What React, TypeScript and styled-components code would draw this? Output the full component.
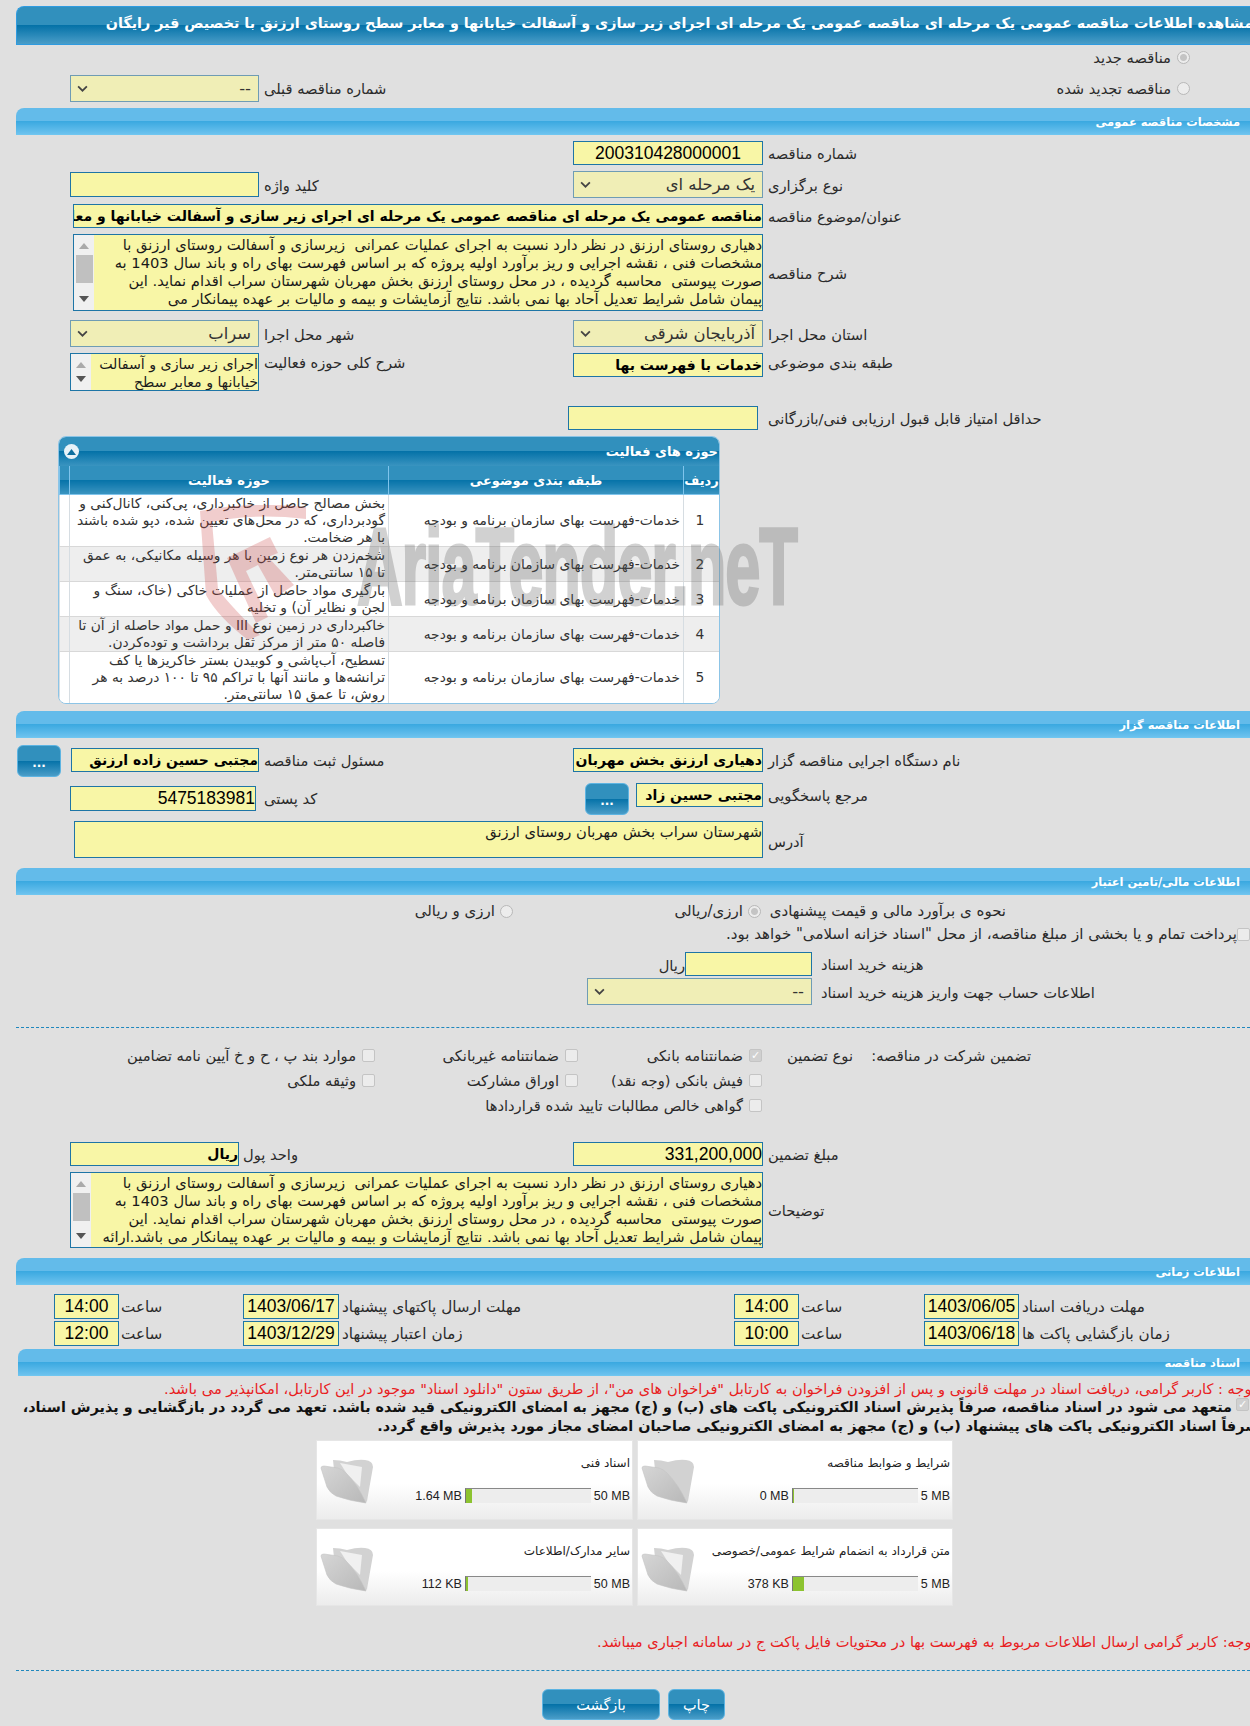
import { ReactNode } from 'react'
import styled, { createGlobalStyle } from 'styled-components'

const GlobalStyle = createGlobalStyle`
  html, body {
    margin: 0;
    padding: 0;
    width: 1250px;
    height: 1726px;
    overflow: hidden;
    background: #e0e0e0;
  }
  body {
    font-family: "DejaVu Sans", "Liberation Sans", sans-serif;
    font-size: 14.7px;
    color: #2b2b2b;
  }
`

const darkBar = 'linear-gradient(#3190bd 0, #3190bd 49%, #0572a8 50%, #4a9dc8 100%)'

const Page = styled.div`
  position: relative;
  direction: rtl;
  width: 1250px;
  height: 1726px;
  overflow: hidden;
`

const TitleBar = styled.div`
  box-sizing: border-box;
  height: 39px;
  margin: 6px 0 0 16px;
  border: 1px solid #2f9be0;
  border-right: 0;
  border-radius: 8px 0 0 0;
  background: ${darkBar};
  color: #fff;
  font-size: 14.3px;
  font-weight: bold;
  line-height: 32px;
  white-space: nowrap;
  overflow: hidden;
  text-indent: -3px;
`

const SectionBar = styled.div<{ $left?: number; $top: number }>`
  box-sizing: border-box;
  height: 27px;
  margin: ${(p) => p.$top}px 0 0 ${(p) => p.$left ?? 16}px;
  border-radius: 8px 0 0 0;
  border-bottom: 1px solid #6fc6f0;
  background: linear-gradient(#63bbea 0, #63bbea 49%, #39a8e0 50%, #6cc2ee 100%);
  color: #fff;
  font-size: 11.4px;
  font-weight: bold;
  line-height: 28px;
  padding-right: 10px;
`

const RadioLine = styled.div<{ $top: number; $h: number }>`
  display: flex;
  align-items: center;
  height: ${(p) => p.$h}px;
  margin-top: ${(p) => p.$top}px;
  padding-right: 60px;
  gap: 6px;
`

const Row = styled.div<{ $top: number; $h: number; $cols?: string }>`
  display: grid;
  grid-template-columns: ${(p) => p.$cols ?? '487px 190px 314px 189px'};
  height: ${(p) => p.$h}px;
  margin-top: ${(p) => p.$top}px;
`

const Cell = styled.div`
  display: flex;
  justify-content: flex-start;
  min-width: 0;
`

const WideCell = styled.div`
  grid-column: 2 / 5;
  display: flex;
`

const LabelText = styled.div<{ $h?: number; $pad?: number }>`
  line-height: ${(p) => (p.$h ?? 24) + 2}px;
  text-align: left;
  padding-left: ${(p) => p.$pad ?? 5}px;
  white-space: nowrap;
`

const Input = styled.div<{ $w?: number; $h?: number; $bold?: boolean; $mt?: number }>`
  box-sizing: border-box;
  flex: none;
  width: ${(p) => (p.$w ? `${p.$w}px` : '100%')};
  height: ${(p) => p.$h ?? 24}px;
  margin-top: ${(p) => p.$mt ?? 0}px;
  background: #f8f6a6;
  border: 1px solid #1e75a6;
  color: #000;
  font-size: 14px;
  font-weight: ${(p) => (p.$bold ? 'bold' : 'normal')};
  line-height: 23px;
  white-space: nowrap;
  overflow: hidden;
`

const Center = styled.span`
  display: block;
  text-align: center;
  font-family: "Liberation Sans", sans-serif;
  font-size: 17.5px;
  line-height: 23px;
`

const Num = styled.span`
  display: block;
  direction: ltr;
  text-align: right;
  font-family: "Liberation Sans", sans-serif;
  font-size: 17.5px;
  line-height: 23px;
`

const SelectBox = styled.div<{ $w?: number }>`
  box-sizing: border-box;
  display: flex;
  align-items: center;
  justify-content: space-between;
  width: ${(p) => (p.$w ? `${p.$w}px` : '100%')};
  height: 27px;
  padding: 0 7px 0 6px;
  background: #f0eeb6;
  border: 1px solid #6f9cb4;
  color: #333;
  font-size: 16.4px;
  white-space: nowrap;
`

const Chevron = styled.svg`
  width: 11px;
  height: 7px;
  flex: none;
`

const Select = ({ value, w }: { value: string; w?: number }) => (
  <SelectBox $w={w}>
    <span>{value}</span>
    <Chevron viewBox="0 0 12 8">
      <path d="M1 1.5 L6 6.5 L11 1.5" fill="none" stroke="#444" strokeWidth="2" />
    </Chevron>
  </SelectBox>
)

const Area = styled.div<{ $w?: number; $h: number }>`
  box-sizing: border-box;
  display: flex;
  width: ${(p) => (p.$w ? `${p.$w}px` : '100%')};
  height: ${(p) => p.$h}px;
  background: #f8f6a6;
  border: 1px solid #1e75a6;
  overflow: hidden;
`

const AreaText = styled.div<{ $size?: number }>`
  flex: 1;
  min-width: 0;
  padding-top: 1px;
  font-size: ${(p) => p.$size ?? 14.7}px;
  line-height: 18px;
  color: #1a1a1a;
  white-space: pre;
  overflow: hidden;
`

const Scroll = styled.div`
  box-sizing: border-box;
  display: flex;
  flex-direction: column;
  align-items: center;
  justify-content: space-between;
  flex: none;
  width: 20px;
  padding: 8px 0;
  background: #f0f0f0;
`

const ScrollThumb = styled.div`
  width: 17px;
  height: 28px;
  margin: 6px 0 auto;
  background: #c0c0c0;
`

const ScrollArrow = styled.svg`
  width: 10px;
  height: 6px;
  flex: none;
`

const FakeScroll = ({ thumb }: { thumb?: boolean }) => (
  <Scroll>
    <ScrollArrow viewBox="0 0 10 6">
      <path d="M5 0 L10 6 L0 6 Z" fill="#aaa" />
    </ScrollArrow>
    {thumb && <ScrollThumb />}
    <ScrollArrow viewBox="0 0 10 6">
      <path d="M5 6 L10 0 L0 0 Z" fill="#555" />
    </ScrollArrow>
  </Scroll>
)

const DotButton = styled.div<{ $mr: number }>`
  box-sizing: border-box;
  flex: none;
  width: 44px;
  height: 32px;
  margin-right: ${(p) => p.$mr}px;
  border: 1px solid #5db4e2;
  border-radius: 6px;
  background: ${darkBar};
  color: #fff;
  font-size: 12px;
  font-weight: bold;
  text-align: center;
  line-height: 34px;
`

const RadioDot = styled.span<{ $on?: boolean }>`
  box-sizing: border-box;
  flex: none;
  width: 13px;
  height: 13px;
  border-radius: 50%;
  border: 1px solid #b8b8b8;
  background: ${(p) => (p.$on ? 'radial-gradient(#c4c4c4 0 3px, #ececec 4px)' : '#ececec')};
`

const CheckBox = styled.span<{ $on?: boolean }>`
  box-sizing: border-box;
  flex: none;
  display: inline-block;
  width: 13px;
  height: 13px;
  border: 1px solid #c4c4c4;
  border-radius: 2px;
  background: ${(p) => (p.$on ? '#d0d0d0' : '#ececec')};
  color: #fff;
  font-size: 11px;
  line-height: 12px;
  text-align: center;
`

const PledgeBox = styled(CheckBox)`
  position: absolute;
  right: 1px;
  top: 0;
`

const Panel = styled.div`
  box-sizing: border-box;
  width: 662px;
  height: 268px;
  margin: 6px 530px 0 0;
  border: 1px solid #8cc4e6;
  border-radius: 8px;
  overflow: hidden;
  background: #fff;
`

const PanelHead = styled.div`
  display: flex;
  align-items: center;
  justify-content: space-between;
  height: 29px;
  padding: 0 1px 0 5px;
  background: linear-gradient(#3190bd 0, #3190bd 49%, #0572a8 50%, #3a94c0 100%);
  color: #fff;
  font-size: 13px;
  font-weight: bold;
`

const Collapse = styled.span`
  display: flex;
  align-items: center;
  justify-content: center;
  width: 15px;
  height: 15px;
  border-radius: 50%;
  background: #e8f2f8;
`

const Table = styled.table`
  width: 100%;
  border-collapse: collapse;
  table-layout: fixed;
`

const Th = styled.th<{ $w?: number }>`
  width: ${(p) => (p.$w ? `${p.$w}px` : 'auto')};
  height: 28px;
  padding: 0;
  border-left: 1px solid #7fc4ec;
  border-bottom: 1px solid #7fc4ec;
  background: linear-gradient(#3190bd 0, #3190bd 49%, #0572a8 50%, #3a94c0 100%);
  color: #fff;
  font-size: 13px;
  font-weight: bold;
  white-space: nowrap;
  overflow: hidden;
`

const Tr = styled.tr<{ $odd: boolean }>`
  background: ${(p) => (p.$odd ? '#fff' : '#eeeeee')};
`

const Td = styled.td<{ $center?: boolean }>`
  padding: 0 3px 0 0;
  border-left: 1px solid #d6dde2;
  border-bottom: 1px solid #d8d8d8;
  color: #333;
  font-size: 13.8px;
  line-height: 17px;
  white-space: nowrap;
  text-align: ${(p) => (p.$center ? 'center' : 'right')};
  overflow: hidden;
`

const Watermark = styled.div`
  position: absolute;
  left: 198px;
  top: 505px;
  width: 610px;
  height: 135px;
  display: flex;
  direction: ltr;
  pointer-events: none;
`

const ShieldMark = styled.svg`
  flex: none;
`

const WaterText = styled.span`
  flex: none;
  margin: -7px 0 0 49px;
  font-family: "Liberation Sans", sans-serif;
  font-size: 110px;
  font-weight: bold;
  line-height: 135px;
  letter-spacing: -2px;
  color: #5a5a5a;
  -webkit-text-stroke: 3px #5a5a5a;
  opacity: 0.27;
  transform: scaleX(0.575);
  transform-origin: left center;
  white-space: nowrap;
`

const FinanceLine = styled.div<{ $top: number; $h: number; $pad: number }>`
  display: flex;
  align-items: center;
  height: ${(p) => p.$h}px;
  margin-top: ${(p) => p.$top}px;
  padding-right: ${(p) => p.$pad}px;
  font-size: 15px;
  white-space: nowrap;
`

const PlainLabel = styled.span<{ $w?: number; $pad?: number }>`
  box-sizing: border-box;
  flex: none;
  width: ${(p) => (p.$w ? `${p.$w}px` : 'auto')};
  padding-right: ${(p) => p.$pad ?? 0}px;
`

const CurrencyText = styled.span`
  line-height: 27px;
`

const Dashed = styled.div<{ $top: number }>`
  margin: ${(p) => p.$top}px 0 0 16px;
  border-top: 1px dashed #1f87bd;
`

const GuaranteeGrid = styled.div`
  display: grid;
  grid-template-columns: 178px 91px 184px 203px 200px;
  grid-auto-rows: 25px;
  margin-top: 15px;
  padding-right: 219px;
  align-items: center;
  white-space: nowrap;
`

const Check = styled.div<{ $start?: number }>`
  display: flex;
  align-items: center;
  gap: 6px;
  grid-column-start: ${(p) => p.$start ?? 'auto'};
  white-space: nowrap;
`

const TimeRow = styled.div<{ $top: number }>`
  display: grid;
  grid-template-columns: 231px 95px 125px 65px 395px 96px 124px 65px;
  height: 25px;
  margin-top: ${(p) => p.$top}px;
  font-size: 15.2px;
`

const RedNote = styled.div<{ $top: number }>`
  margin-top: ${(p) => p.$top}px;
  margin-right: -6px;
  color: #e8201e;
  font-size: 14.6px;
  line-height: 18px;
  white-space: nowrap;
`

const Pledge = styled.div`
  position: relative;
  font-weight: bold;
  font-size: 14.35px;
  line-height: 19px;
  color: #111;
  white-space: nowrap;
`

const PledgeLine = styled.div<{ $right: number }>`
  margin-right: ${(p) => p.$right}px;
`

const Cards = styled.div`
  display: grid;
  grid-template-columns: 316px 317px;
  grid-template-rows: 80px 78px;
  gap: 8px 4px;
  margin: 4px 297px 0 0;
`

const Card = styled.div`
  box-sizing: border-box;
  display: flex;
  justify-content: space-between;
  border: 1px solid #e6e6e6;
  background: linear-gradient(#fff 0, #fff 55%, #ececec 100%);
  padding: 14px 2px 0 3px;
`

const CardBody = styled.div`
  display: flex;
  flex-direction: column;
  flex: 1;
  gap: 17px;
  min-width: 0;
`

const CardName = styled.div`
  font-size: 12px;
  line-height: 16px;
  color: #222;
  white-space: nowrap;
`

const Meter = styled.div`
  display: flex;
  align-items: center;
  direction: ltr;
  justify-content: flex-end;
  gap: 3px;
  font-family: "Liberation Sans", sans-serif;
  font-size: 12.5px;
  color: #222;
`

const Track = styled.div`
  box-sizing: border-box;
  width: 126px;
  height: 15px;
  background: #ededed;
  border-top: 1px solid #888;
  border-left: 1px solid #777;
`

const Fill = styled.div`
  height: 100%;
  background: #8cc330;
`

const FolderIcon = styled.svg`
  width: 54px;
  height: 48px;
  flex: none;
  margin-top: 4px;
`

const Folder = ({ paper }: { paper: boolean }) => (
  <FolderIcon viewBox="0 0 54 48">
    <defs>
      <linearGradient id="folderFace" x1="0" y1="0" x2="1" y2="1">
        <stop offset="0" stopColor="#d6d6d6" />
        <stop offset="1" stopColor="#b8b8b8" />
      </linearGradient>
    </defs>
    <path d="M13 1 Q20 1 27 3 Q38 0 45 1 Q53 2 53 8 L47 42 Q46 45 42 43 L16 30 Z" fill="#d2d2d2" />
    {paper && <path d="M20 4 L42 8 L40 28 L27 15 Z" fill="#f0f0f0" />}
    <path
      d="M1 9 Q1 7 4 7 L18 9 Q22 10 26 14 Q38 26 46 44 Q30 42 16 37 Q10 34 7 28 Z"
      fill="url(#folderFace)"
      stroke="#c4c4c4"
      strokeWidth="0.6"
    />
  </FolderIcon>
)

const Buttons = styled.div`
  display: flex;
  justify-content: flex-start;
  gap: 8px;
  margin: 18px 525px 0 0;
`

const Btn = styled.div<{ $w: number }>`
  box-sizing: border-box;
  width: ${(p) => p.$w}px;
  height: 31px;
  border: 1px solid #5db4e2;
  border-radius: 6px;
  background: ${darkBar};
  color: #fff;
  font-size: 14.5px;
  text-align: center;
  line-height: 30px;
`

const descLines = [
  'دهیاری روستای ارزنق در نظر دارد نسبت به اجرای عملیات عمرانی  زیرسازی و آسفالت روستای ارزنق با',
  'مشخصات فنی ، نقشه اجرایی و ریز برآورد اولیه پروژه که بر اساس فهرست بهای راه و باند سال 1403 به',
  'صورت پیوستی  محاسبه گردیده ، در محل روستای ارزنق بخش مهربان شهرستان سراب اقدام نماید. این',
]

const lastDescLine = 'پیمان شامل شرایط تعدیل آحاد بها نمی باشد. نتایج آزمایشات و بیمه و مالیات بر عهده پیمانکار می'

const tenderTitle =
  'مناقصه عمومی یک مرحله ای مناقصه عمومی یک مرحله ای اجرای زیر سازی و آسفالت خیابانها و معابر سطح روستای ارزنق با تخصیص قیر رایگان'

const rows = [
  [
    'بخش مصالح حاصل از خاکبرداری، پی‌کنی، کانال‌کنی و',
    'گودبرداری، که در محل‌های تعیین شده، دپو شده باشند',
    'با هر ضخامت.',
  ],
  ['شخم‌زدن هر نوع زمین با هر وسیله مکانیکی، به عمق', 'تا ۱۵ سانتی‌متر.'],
  ['بارگیری مواد حاصل از عملیات خاکی (خاک، سنگ و', 'لجن و نظایر آن) و تخلیه'],
  ['خاکبرداری در زمین نوع III و حمل مواد حاصله از آن تا', 'فاصله ۵۰ متر از مرکز ثقل برداشت و توده‌کردن.'],
  [
    'تسطیح، آب‌پاشی و کوبیدن بستر خاکریزها یا کف',
    'ترانشه‌ها و مانند آنها با تراکم ۹۵ تا ۱۰۰ درصد به هر',
    'روش، تا عمق ۱۵ سانتی‌متر.',
  ],
]

const docs = [
  { name: 'شرایط و ضوابط مناقصه', used: '0 MB', max: '5 MB', px: 1, paper: false },
  { name: 'اسناد فنی', used: '1.64 MB', max: '50 MB', px: 6, paper: true },
  { name: 'متن قرارداد به انضمام شرایط عمومی/خصوصی', used: '378 KB', max: '5 MB', px: 11, paper: true },
  { name: 'سایر مدارک/اطلاعات', used: '112 KB', max: '50 MB', px: 2, paper: true },
]

const Lines = ({ items }: { items: string[] }) => (
  <>
    {items.map((l, i) => (
      <div key={i}>{l}</div>
    ))}
  </>
)

const Label = ({ children, h, pad }: { children: ReactNode; h?: number; pad?: number }) => (
  <LabelText $h={h} $pad={pad}>
    {children}
  </LabelText>
)

const TimeLine = ({ top, a, b, c, d, e, f }: Record<'a' | 'b' | 'c' | 'd' | 'e' | 'f', string> & { top: number }) => (
  <TimeRow $top={top}>
    <Label pad={3}>{a}</Label>
    <Input $h={25}>
      <Center>{b}</Center>
    </Input>
    <Label pad={2}>ساعت</Label>
    <Input $h={25}>
      <Center>{c}</Center>
    </Input>
    <Label pad={3}>{d}</Label>
    <Input $h={25}>
      <Center>{e}</Center>
    </Input>
    <Label pad={2}>ساعت</Label>
    <Input $h={25}>
      <Center>{f}</Center>
    </Input>
  </TimeRow>
)

export default function App() {
  return (
    <>
      <GlobalStyle />
      <Page>
        <TitleBar>
          مشاهده اطلاعات مناقصه عمومی یک مرحله ای مناقصه عمومی یک مرحله ای اجرای زیر سازی و آسفالت خیابانها و معابر سطح روستای ارزنق با تخصیص قیر رایگان
        </TitleBar>

        <RadioLine $top={5} $h={15}>
          <RadioDot $on />
          <PlainLabel>مناقصه جدید</PlainLabel>
        </RadioLine>
        <Row $top={10} $h={26}>
          <Cell>
            <RadioLine $top={0} $h={26}>
              <RadioDot />
              <PlainLabel>مناقصه تجدید شده</PlainLabel>
            </RadioLine>
          </Cell>
          <Cell />
          <Label h={26}>شماره مناقصه قبلی</Label>
          <Select value="--" />
        </Row>

        <SectionBar $top={7}>مشخصات مناقصه عمومی</SectionBar>

        <Row $top={6} $h={24}>
          <Label>شماره مناقصه</Label>
          <Input>
            <Center>200310428000001</Center>
          </Input>
        </Row>
        <Row $top={6} $h={27}>
          <Label h={27}>نوع برگزاری</Label>
          <Select value="یک مرحله ای" />
          <Label h={27}>کلید واژه</Label>
          <Input $h={25} $mt={1} />
        </Row>
        <Row $top={6} $h={24}>
          <Label>عنوان/موضوع مناقصه</Label>
          <WideCell>
            <Input $w={690} $bold>
              {tenderTitle}
            </Input>
          </WideCell>
        </Row>
        <Row $top={6} $h={77}>
          <Label h={77}>شرح مناقصه</Label>
          <WideCell>
            <Area $w={690} $h={77}>
              <AreaText>
                <Lines items={[...descLines, lastDescLine]} />
              </AreaText>
              <FakeScroll thumb />
            </Area>
          </WideCell>
        </Row>
        <Row $top={9} $h={27}>
          <Label h={27}>استان محل اجرا</Label>
          <Select value="آذربایجان شرقی" />
          <Label h={27}>شهر محل اجرا</Label>
          <Select value="سراب" />
        </Row>
        <Row $top={6} $h={38}>
          <Label h={18}>طبقه بندی موضوعی</Label>
          <Input $bold>خدمات با فهرست بها</Input>
          <Label h={18}>شرح کلی حوزه فعالیت</Label>
          <Area $h={38}>
            <AreaText $size={14.2}>
              <Lines items={['اجرای زیر سازی و آسفالت', 'خیابانها و معابر سطح']} />
            </AreaText>
            <FakeScroll />
          </Area>
        </Row>
        <Row $top={15} $h={24} $cols="492px 190px">
          <Label pad={10}>حداقل امتیاز قابل قبول ارزیابی فنی/بازرگانی</Label>
          <Input />
        </Row>

        <Panel>
          <PanelHead>
            <span>حوزه های فعالیت</span>
            <Collapse>
              <svg width="9" height="6" viewBox="0 0 9 6">
                <path d="M4.5 0 L9 6 L0 6 Z" fill="#0f6f9f" />
              </svg>
            </Collapse>
          </PanelHead>
          <Table>
            <thead>
              <tr>
                <Th $w={35}>ردیف</Th>
                <Th $w={294}>طبقه بندی موضوعی</Th>
                <Th $w={318}>حوزه فعالیت</Th>
                <Th />
              </tr>
            </thead>
            <tbody>
              {rows.map((lines, i) => (
                <Tr key={i} $odd={i % 2 === 0}>
                  <Td $center>{i + 1}</Td>
                  <Td>خدمات-فهرست بهای سازمان برنامه و بودجه</Td>
                  <Td>
                    <Lines items={lines} />
                  </Td>
                  <Td />
                </Tr>
              ))}
            </tbody>
          </Table>
        </Panel>

        <Watermark>
          <ShieldMark width="110" height="135" viewBox="0 0 110 135">
            <path
              d="M2 6 Q50 -4 108 2 L108 14 Q55 8 14 17 L20 84 Q28 96 62 130 L50 135 Q20 112 8 90 Z"
              fill="rgba(205,70,70,0.27)"
            />
            <path d="M29 53 L72 32 L80 48 L70 52 L96 80 L78 92 L60 60 L48 66 L70 112 L58 118 Z" fill="rgba(205,70,70,0.27)" />
          </ShieldMark>
          <WaterText>AriaTender.neT</WaterText>
        </Watermark>

        <SectionBar $top={7}>اطلاعات مناقصه گزار</SectionBar>

        <Row $top={7} $h={32}>
          <Label h={30}>نام دستگاه اجرایی مناقصه گزار</Label>
          <Input $mt={3} $bold>
            دهیاری ارزنق بخش مهربان
          </Input>
          <Label h={30}>مسئول ثبت مناقصه</Label>
          <Cell>
            <Input $w={188} $mt={3} $bold>
              مجتبی حسین زاده ارزنق
            </Input>
            <DotButton $mr={10}>...</DotButton>
          </Cell>
        </Row>
        <Row $top={6} $h={32} $cols="487px 190px 317px 186px">
          <Label>مرجع پاسخگویی</Label>
          <Cell>
            <Input $w={127} $bold>
              مجتبی حسین زاد
            </Input>
            <DotButton $mr={7}>...</DotButton>
          </Cell>
          <Label h={30} pad={8}>
            کد پستی
          </Label>
          <Input $h={25} $mt={3}>
            <Num>5475183981</Num>
          </Input>
        </Row>
        <Row $top={6} $h={37}>
          <Label h={40}>آدرس</Label>
          <WideCell>
            <Area $w={689} $h={37}>
              <AreaText>شهرستان سراب بخش مهربان روستای ارزنق</AreaText>
            </Area>
          </WideCell>
        </Row>

        <SectionBar $top={10}>اطلاعات مالی/تامین اعتبار</SectionBar>

        <FinanceLine $top={6} $h={20} $pad={244}>
          <PlainLabel $w={245}>نحوه ی برآورد مالی و قیمت پیشنهادی</PlainLabel>
          <RadioDot $on />
          <PlainLabel $w={235} $pad={5}>
            ارزی/ریالی
          </PlainLabel>
          <RadioDot />
          <PlainLabel $pad={5}>ارزی و ریالی</PlainLabel>
        </FinanceLine>
        <FinanceLine $top={3} $h={20} $pad={0}>
          <CheckBox />
          <PlainLabel>پرداخت تمام و یا بخشی از مبلغ مناقصه، از محل "اسناد خزانه اسلامی" خواهد بود.</PlainLabel>
        </FinanceLine>
        <Row $top={8} $h={24} $cols="438px 127px auto">
          <Label pad={9}>هزینه خرید اسناد</Label>
          <Input />
          <CurrencyText>ریال</CurrencyText>
        </Row>
        <Row $top={2} $h={27} $cols="438px 225px">
          <Label h={27} pad={9}>
            اطلاعات حساب جهت واریز هزینه خرید اسناد
          </Label>
          <Select value="--" />
        </Row>

        <Dashed $top={22} />

        <GuaranteeGrid>
          <PlainLabel>تضمین شرکت در مناقصه:</PlainLabel>
          <PlainLabel>نوع تضمین</PlainLabel>
          <Check>
            <CheckBox $on>✓</CheckBox>
            ضمانتنامه بانکی
          </Check>
          <Check>
            <CheckBox />
            ضمانتنامه غیربانکی
          </Check>
          <Check>
            <CheckBox />
            موارد بند پ ، ح و خ آیین نامه تضامین
          </Check>
          <Check $start={3}>
            <CheckBox />
            فیش بانکی (وجه نقد)
          </Check>
          <Check>
            <CheckBox />
            اوراق مشارکت
          </Check>
          <Check>
            <CheckBox />
            وثیقه ملکی
          </Check>
          <Check $start={3}>
            <CheckBox />
            گواهی خالص مطالبات تایید شده قراردادها
          </Check>
        </GuaranteeGrid>

        <Row $top={24} $h={24} $cols="487px 190px 334px 169px">
          <Label>مبلغ تضمین</Label>
          <Input>
            <Num>331,200,000</Num>
          </Input>
          <Label pad={4}>واحد پول</Label>
          <Input $bold>ریال</Input>
        </Row>
        <Row $top={6} $h={76}>
          <Label h={76}>توضیحات</Label>
          <WideCell>
            <Area $w={696} $h={76}>
              <AreaText>
                <Lines items={[...descLines, `${lastDescLine} باشد.ارائه`]} />
              </AreaText>
              <FakeScroll thumb />
            </Area>
          </WideCell>
        </Row>

        <SectionBar $top={10}>اطلاعات زمانی</SectionBar>

        <TimeLine
          top={9}
          a="مهلت دریافت اسناد"
          b="1403/06/05"
          c="14:00"
          d="مهلت ارسال پاکتهای پیشنهاد"
          e="1403/06/17"
          f="14:00"
        />
        <TimeLine
          top={2}
          a="زمان بازگشایی پاکت ها"
          b="1403/06/18"
          c="10:00"
          d="زمان اعتبار پیشنهاد"
          e="1403/12/29"
          f="12:00"
        />

        <SectionBar $top={3} $left={18}>
          اسناد مناقصه
        </SectionBar>

        <RedNote $top={4}>
          توجه : کاربر گرامی، دریافت اسناد در مهلت قانونی و پس از افزودن فراخوان به کارتابل "فراخوان های من"، از طریق ستون "دانلود اسناد" موجود در این کارتابل، امکانپذیر می باشد.
        </RedNote>
        <Pledge>
          <PledgeLine $right={18}>
            متعهد می شود در اسناد مناقصه، صرفاً پذیرش اسناد الکترونیکی پاکت های (ب) و (ج) مجهز به امضای الکترونیکی قید شده باشد. تعهد می گردد در بازگشایی و پذیرش اسناد،
          </PledgeLine>
          <PledgeLine $right={-9}>
            صرفاً اسناد الکترونیکی پاکت های پیشنهاد (ب) و (ج) مجهز به امضای الکترونیکی صاحبان امضای مجاز مورد پذیرش واقع گردد.
          </PledgeLine>
          <PledgeBox $on>✓</PledgeBox>
        </Pledge>

        <Cards>
          {docs.map((d) => (
            <Card key={d.name}>
              <CardBody>
                <CardName>{d.name}</CardName>
                <Meter>
                  <span>{d.used}</span>
                  <Track>
                    <Fill style={{ width: d.px }} />
                  </Track>
                  <span>{d.max}</span>
                </Meter>
              </CardBody>
              <Folder paper={d.paper} />
            </Card>
          ))}
        </Cards>

        <RedNote $top={27}>
          توجه: کاربر گرامی ارسال اطلاعات مربوط به فهرست بها در محتویات فایل پاکت ج در سامانه اجباری میباشد.
        </RedNote>

        <Dashed $top={19} />

        <Buttons>
          <Btn $w={57}>چاپ</Btn>
          <Btn $w={118}>بازگشت</Btn>
        </Buttons>
      </Page>
    </>
  )
}
